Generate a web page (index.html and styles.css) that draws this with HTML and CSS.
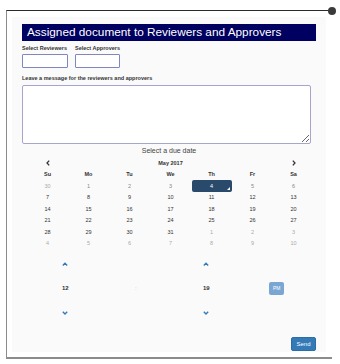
FILE: index.html
```html
<!DOCTYPE html>
<html lang="en">
<head>
  <meta charset="UTF-8" />
  <title>Assign document</title>
  <link rel="stylesheet" href="styles.css">
</head>
<body>
  <div class="modal">
    <span class="close"></span>
    <div class="panel">
      <h1 class="title">Assigned document to Reviewers and Approvers</h1>

      <div class="pickers">
        <div class="field">
          <label>Select Reviewers</label>
          <input type="text" />
        </div>
        <div class="field">
          <label>Select Approvers</label>
          <input type="text" class="narrow" />
        </div>
      </div>

      <label class="msg-label">Leave a message for the reviewers and approvers</label>
      <textarea class="msg"></textarea>

      <p class="due">Select a due date</p>

      <div class="cal">
        <span class="nav"><svg width="4" height="6" viewBox="0 0 4 6"><path d="M3.2 0.6L1 3L3.2 5.4" fill="none" stroke="#333" stroke-width="1.3"/></svg></span>
        <span class="month">May 2017</span>
        <span class="nav"><svg width="4" height="6" viewBox="0 0 4 6"><path d="M0.8 0.6L3 3L0.8 5.4" fill="none" stroke="#333" stroke-width="1.3"/></svg></span>

        <span class="dow">Su</span><span class="dow">Mo</span><span class="dow">Tu</span><span class="dow">We</span><span class="dow">Th</span><span class="dow">Fr</span><span class="dow">Sa</span>

        <span class="old">30</span><span class="off">1</span><span class="off">2</span><span class="off">3</span><span class="day active">4</span><span class="off">5</span><span class="off">6</span>
        <span>7</span><span>8</span><span>9</span><span>10</span><span>11</span><span>12</span><span>13</span>
        <span>14</span><span>15</span><span>16</span><span>17</span><span>18</span><span>19</span><span>20</span>
        <span>21</span><span>22</span><span>23</span><span>24</span><span>25</span><span>26</span><span>27</span>
        <span>28</span><span>29</span><span>30</span><span>31</span><span class="old">1</span><span class="old">2</span><span class="old">3</span>
        <span class="old">4</span><span class="old">5</span><span class="old">6</span><span class="old">7</span><span class="old">8</span><span class="old">9</span><span class="old">10</span>
      </div>

      <div class="time">
        <span class="chev"><svg width="6" height="4" viewBox="0 0 6 4"><path d="M0.8 3.4L3 1.2L5.2 3.4" fill="none" stroke="#337ab7" stroke-width="1.4"/></svg></span>
        <span></span>
        <span class="chev"><svg width="6" height="4" viewBox="0 0 6 4"><path d="M0.8 3.4L3 1.2L5.2 3.4" fill="none" stroke="#337ab7" stroke-width="1.4"/></svg></span>
        <span></span>

        <span class="val">12</span>
        <span class="sep">:</span>
        <span class="val">19</span>
        <span class="pm">PM</span>

        <span class="chev"><svg width="6" height="4" viewBox="0 0 6 4"><path d="M0.8 0.8L3 3L5.2 0.8" fill="none" stroke="#337ab7" stroke-width="1.4"/></svg></span>
        <span></span>
        <span class="chev"><svg width="6" height="4" viewBox="0 0 6 4"><path d="M0.8 0.8L3 3L5.2 0.8" fill="none" stroke="#337ab7" stroke-width="1.4"/></svg></span>
        <span></span>
      </div>

      <div class="actions">
        <button class="send">Send</button>
      </div>
    </div>
  </div>
</body>
</html>
```

FILE: styles.css
```css
* {
  box-sizing: border-box;
}
body {
  margin: 0;
  background: #fff;
  font-family: "Liberation Sans", Arial, sans-serif;
  color: #333;
}
.modal {
  position: relative;
  margin: 10px 0 0 6px;
  width: 326px;
  background: #fff;
  border-top: 1px solid #2b2b2b;
  border-left: 1px solid #8c8c8c;
  border-bottom: 2px solid #8c8c8c;
  padding: 6px 6px 5px 5px;
}
.close {
  position: absolute;
  top: -4px;
  right: -4px;
  width: 8px;
  height: 8px;
  border-radius: 50%;
  background: #3a3a3a;
}
.panel {
  background: #fafafa;
  padding: 7px 10px 1px 10px;
}
.title {
  margin: 0;
  background: #000060;
  color: #fff;
  font-weight: normal;
  font-size: 11.8px;
  line-height: 17px;
  padding-left: 5px;
  white-space: nowrap;
}
.pickers {
  display: flex;
  gap: 7px;
  margin-top: 3px;
}
.field label,
.msg-label {
  display: block;
  font-size: 5.5px;
  font-weight: bold;
  line-height: 8px;
  color: #333;
}
.field input {
  display: block;
  width: 46px;
  height: 14px;
  margin-top: 2px;
  border: 1px solid #7f86c0;
  border-radius: 1px;
  background: #fff;
}
.field input.narrow {
  width: 45px;
}
.msg-label {
  margin-top: 6px;
}
.msg {
  display: block;
  width: 289px;
  height: 59px;
  margin-top: 3px;
  border: 1px solid #a6a6cc;
  border-radius: 2px;
  background: #fff;
}
.due {
  margin: 2px 0 0;
  text-align: center;
  font-size: 7px;
  line-height: 10px;
  color: #444;
}
.cal {
  margin: 1px 0 0 5px;
  width: 287px;
  display: grid;
  grid-template-columns: repeat(7, 41px);
  grid-auto-rows: 11.5px;
  font-size: 5.5px;
  text-align: center;
  align-items: center;
}
.cal span {
  display: flex;
  align-items: center;
  justify-content: center;
  height: 100%;
}
.cal .month {
  grid-column: span 5;
  font-weight: bold;
}
.cal .dow {
  font-weight: bold;
}
.cal .old {
  color: #aaa;
}
.cal .off {
  color: #888;
}
.cal .active {
  position: relative;
  background: #2a4a6b;
  color: #fff;
  border-radius: 2px;
  margin: 0 0.5px;
}
.cal .active::after {
  content: "";
  position: absolute;
  right: 2px;
  bottom: 2px;
  border: solid transparent;
  border-width: 0 0 3px 3px;
  border-bottom-color: #fff;
}
.time {
  display: grid;
  grid-template-columns: repeat(4, 70.5px);
  grid-auto-rows: 24.5px;
  margin: 2.5px 0 0 8px;
  align-items: center;
  justify-items: center;
}
.chev svg {
  display: block;
}
.val {
  font-size: 6px;
  font-weight: bold;
  color: #333;
}
.sep {
  font-size: 6px;
  color: #bbb;
}
.pm {
  width: 15px;
  height: 13px;
  line-height: 13px;
  text-align: center;
  font-size: 5px;
  color: #fff;
  background: #7aa6d3;
  border-radius: 2px;
}
.actions {
  display: flex;
  justify-content: flex-end;
  margin-top: 11.5px;
}
.send {
  width: 25px;
  height: 14px;
  padding: 0;
  font-family: inherit;
  font-size: 6px;
  color: #fff;
  background: #337ab7;
  border: 1px solid #2e6da4;
  border-radius: 2px;
}
```
